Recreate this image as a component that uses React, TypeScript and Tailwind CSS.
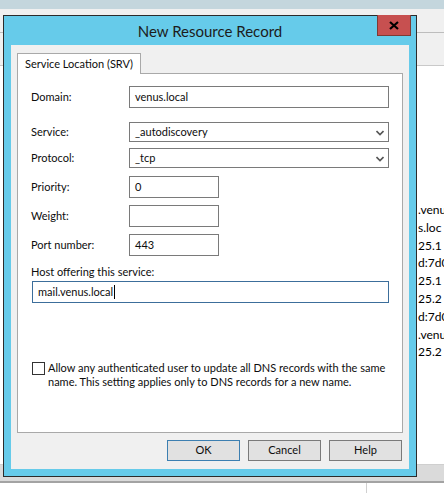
const rightFragments = [".venu", "s.loc", "25.1", "d:7d0", "25.1", "25.2", "d:7d0", ".venu", "25.2"]

function TextBox({ value, width, caret }: { value: string; width: string; caret?: boolean }) {
  return (
    <div className={`${width} h-[22px] border bg-white flex items-center pl-[5px] ${caret ? "border-[#3c6e9b]" : "border-[#7a7a7a]"}`}>
      <span>{value}</span>
      {caret && <span className="w-px h-[14px] bg-black ml-px" />}
    </div>
  )
}

function Select({ value }: { value: string }) {
  return (
    <div className="w-[260px] h-[20px] border border-[#7a7a7a] bg-white flex items-center pl-[5px] pr-[4px]">
      <span className="flex-1">{value}</span>
      <svg width="8" height="6" viewBox="0 0 8 6" className="mt-px">
        <polyline points="0.5,1 4,4.5 7.5,1" fill="none" stroke="#555" strokeWidth="1.6" />
      </svg>
    </div>
  )
}

function Row({ label, children, className }: { label: string; children: React.ReactNode; className: string }) {
  return (
    <div className={`flex items-center ${className}`}>
      <span className="w-[98px] shrink-0">{label}</span>
      {children}
    </div>
  )
}

function Button({ label, primary }: { label: string; primary?: boolean }) {
  return (
    <button
      className={`w-[73px] h-[21px] bg-[#e1e1e1] border flex items-center justify-center ${
        primary ? "border-[#3c7fb1]" : "border-[#7a7a7a]"
      }`}
    >
      {label}
    </button>
  )
}

export default function App() {
  return (
    <div className="relative w-[444px] h-[493px] overflow-hidden bg-white font-['Lato',sans-serif] text-[11px] text-[#0d0d0d]">
      {/* console window behind the dialog */}
      <div className="flex flex-col h-full">
        <div className="h-[9px] bg-[#c4d6dd]" />
        <div className="h-[24px] bg-[#f0f0f0] border-b border-[#bdbdbd]" />
        <div className="h-[33px] bg-[#f0f0f0] border-b border-[#c9c9c9]" />
        <div className="flex flex-1">
          <div className="w-[4px] bg-white" />
          <div className="flex-1" />
          <div className="w-[27px] flex flex-col pt-[135px] pl-px leading-[17.8px] text-[12px] overflow-hidden whitespace-nowrap text-black">
            {rightFragments.map((t, i) => (
              <span key={i}>{t}</span>
            ))}
          </div>
        </div>
        <div className="h-[19px] bg-[#dadada] border-t border-[#cfcfcf] border-b-2 border-b-[#a3a3a3]" />
        <div className="h-[10px] flex">
          <div className="w-[366px]" />
          <div className="w-px bg-[#d0d0d0]" />
        </div>
      </div>

      {/* dialog */}
      <div className="absolute left-[3px] top-[15px] w-[414px] h-[462px] border border-[#2b2b2b] bg-[#66cbea] flex flex-col">
        <div className="h-[29px] relative flex items-center justify-center">
          <span className="text-[15px] text-[#1c1c1c] mt-[2px]">New Resource Record</span>
          <div className="absolute right-[5px] top-[-1px] w-[34px] h-[21px] bg-[#c75050] border border-[#7e3a34] border-t-0 flex items-center justify-center">
            <svg width="10" height="9" viewBox="0 0 10 9">
              <path d="M1 1 L9 8 M9 1 L1 8" stroke="#000" strokeWidth="2.2" />
            </svg>
          </div>
        </div>

        <div className="mx-[7px] mb-[7px] flex-1 bg-[#f0f0f0] px-[6px] pt-[8px] pb-[8px] flex flex-col">
          <div className="flex">
            <div className="relative z-10 w-[124px] h-[21px] -mb-px bg-white border border-b-0 border-[#a9a9a9] pl-[7px] flex items-center">
              Service Location (SRV)
            </div>
          </div>
          <div className="h-[360px] bg-white border border-[#a9a9a9] pl-[13px] pr-[13px] flex flex-col">
            <Row label="Domain:" className="mt-[12px]">
              <TextBox value="venus.local" width="w-[260px]" />
            </Row>
            <Row label="Service:" className="mt-[14px]">
              <Select value="_autodiscovery" />
            </Row>
            <Row label="Protocol:" className="mt-[6px]">
              <Select value="_tcp" />
            </Row>
            <Row label="Priority:" className="mt-[8px]">
              <TextBox value="0" width="w-[90px]" />
            </Row>
            <Row label="Weight:" className="mt-[7px]">
              <TextBox value="" width="w-[90px]" />
            </Row>
            <Row label="Port number:" className="mt-[7px]">
              <TextBox value="443" width="w-[90px]" />
            </Row>
            <div className="mt-[8px] h-[16px] flex items-center">Host offering this service:</div>
            <div className="mt-px ml-px">
              <TextBox value="mail.venus.local" width="w-[357px]" caret />
            </div>
            <div className="mt-[58px] ml-px flex items-start gap-[3px]">
              <div className="w-[13px] h-[13px] mt-[1px] border border-[#333] bg-white shrink-0" />
              <p className="leading-[14px] w-[340px]">
                Allow any authenticated user to update all DNS records with the same name. This setting applies only
                to DNS records for a new name.
              </p>
            </div>
          </div>
          <div className="mt-[7px] pr-px flex justify-end gap-[8px]">
            <Button label="OK" primary />
            <Button label="Cancel" />
            <Button label="Help" />
          </div>
        </div>
      </div>
    </div>
  )
}
